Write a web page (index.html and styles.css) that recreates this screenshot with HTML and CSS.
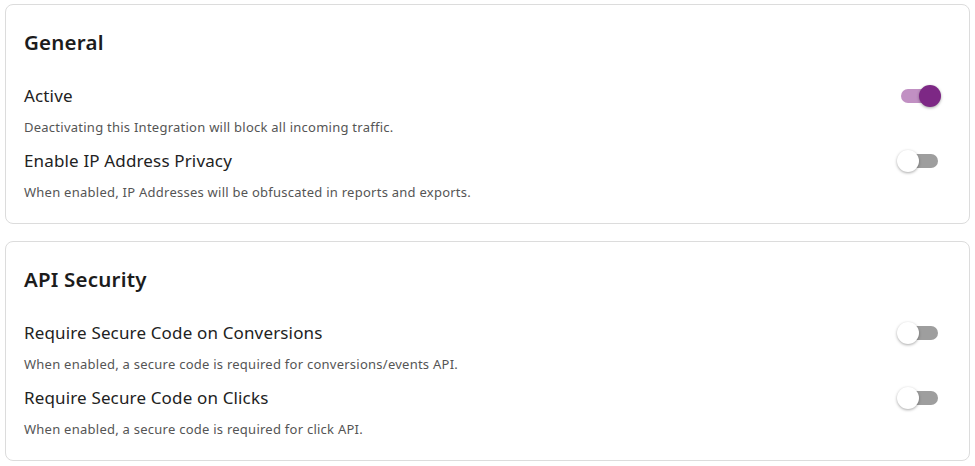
FILE: index.html
```html
<!DOCTYPE html>
<html>
<head>
<meta charset="utf-8">
<link rel="stylesheet" href="styles.css">
</head>
<body>
<div class="page">
  <section class="card">
    <h2 class="card-title">General</h2>
    <div class="setting">
      <div class="setting-row">
        <span class="setting-label">Active</span>
        <span class="switch on"><span class="track"></span><span class="thumb"></span></span>
      </div>
      <p class="setting-desc">Deactivating this Integration will block all incoming traffic.</p>
    </div>
    <div class="setting">
      <div class="setting-row">
        <span class="setting-label">Enable IP Address Privacy</span>
        <span class="switch"><span class="track"></span><span class="thumb"></span></span>
      </div>
      <p class="setting-desc">When enabled, IP Addresses will be obfuscated in reports and exports.</p>
    </div>
  </section>
  <section class="card">
    <h2 class="card-title">API Security</h2>
    <div class="setting">
      <div class="setting-row">
        <span class="setting-label">Require Secure Code on Conversions</span>
        <span class="switch"><span class="track"></span><span class="thumb"></span></span>
      </div>
      <p class="setting-desc">When enabled, a secure code is required for conversions/events API.</p>
    </div>
    <div class="setting">
      <div class="setting-row">
        <span class="setting-label">Require Secure Code on Clicks</span>
        <span class="switch"><span class="track"></span><span class="thumb"></span></span>
      </div>
      <p class="setting-desc">When enabled, a secure code is required for click API.</p>
    </div>
  </section>
</div>
</body>
</html>
```

FILE: styles.css
```css
* { box-sizing: border-box; }
html, body { margin: 0; padding: 0; background: #ffffff; }
body {
  font-family: "Noto Sans", "Open Sans", sans-serif;
  color: #1f1f1f;
}
.page {
  padding: 4px 5px 0 5px;
  display: flex;
  flex-direction: column;
  gap: 17px;
}
.card {
  border: 1px solid #dcdcdc;
  border-radius: 8px;
  padding: 23px 28px 22px 18px;
  display: flex;
  flex-direction: column;
}
.card-title {
  margin: 0 0 28px 0;
  font-size: 20.5px;
  line-height: 28px;
  font-weight: 600;
  letter-spacing: 0.2px;
  color: #1c1c1c;
}
.setting + .setting { margin-top: 13px; }
.setting-row {
  display: flex;
  align-items: center;
  justify-content: space-between;
  height: 24px;
}
.setting-label {
  font-size: 17px;
  line-height: 24px;
  letter-spacing: 0.15px;
  color: #222222;
}
.setting-desc {
  margin: 10px 0 0 0;
  font-size: 13px;
  line-height: 18px;
  letter-spacing: 0.25px;
  color: #555555;
}
.switch {
  position: relative;
  width: 44px;
  height: 22px;
  flex: none;
}
.switch .track {
  position: absolute;
  left: 4px;
  top: 4px;
  width: 37px;
  height: 14px;
  border-radius: 7px;
  background: #9e9e9e;
}
.switch .thumb {
  position: absolute;
  left: 0;
  top: 0;
  width: 22px;
  height: 22px;
  border-radius: 50%;
  background: #ffffff;
  box-shadow: 0 1px 3px rgba(0,0,0,0.35);
}
.switch.on .track { background: #c190c3; }
.switch.on .thumb { left: 22px; background: #7d2885; }
```
